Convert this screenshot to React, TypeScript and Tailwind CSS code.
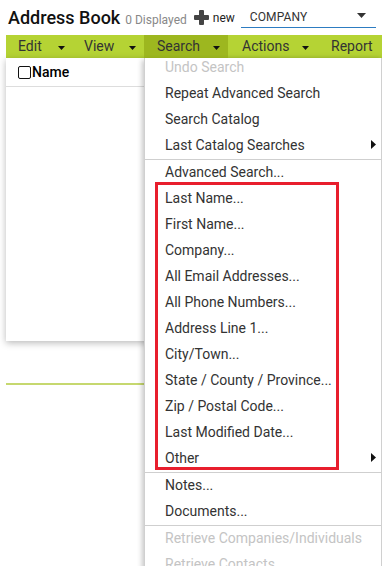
import React from "react";

const DownTri = ({ w = 7, h = 4, color = "#111" }: { w?: number; h?: number; color?: string }) => (
  <svg width={w} height={h} viewBox={`0 0 ${w} ${h}`} className="block">
    <polygon points={`0,0 ${w},0 ${w / 2},${h}`} fill={color} />
  </svg>
);

const RightTri = () => (
  <svg width="5" height="9" viewBox="0 0 5 9" className="block">
    <polygon points="0,0 5,4.5 0,9" fill="#111" />
  </svg>
);

type Item = { label: string; disabled?: boolean; sub?: boolean; sep?: boolean; first?: boolean };

const items: Item[] = [
  { label: "Undo Search", disabled: true, first: true },
  { label: "Repeat Advanced Search" },
  { label: "Search Catalog" },
  { label: "Last Catalog Searches", sub: true },
  { label: "Advanced Search...", sep: true },
  { label: "Last Name..." },
  { label: "First Name..." },
  { label: "Company..." },
  { label: "All Email Addresses..." },
  { label: "All Phone Numbers..." },
  { label: "Address Line 1..." },
  { label: "City/Town..." },
  { label: "State / County / Province..." },
  { label: "Zip / Postal Code..." },
  { label: "Last Modified Date..." },
  { label: "Other", sub: true },
  { label: "Notes...", sep: true },
  { label: "Documents..." },
  { label: "Retrieve Companies/Individuals", disabled: true, sep: true },
  { label: "Retrieve Contacts", disabled: true },
];

export default function App() {
  return (
    <div className="relative w-[382px] h-[566px] overflow-hidden bg-white font-['Roboto',sans-serif]">
      {/* Header */}
      <div className="flex items-center h-[35px] pl-[8px]">
        <div className="flex items-baseline">
          <span className="text-[18px] font-medium text-[#111] leading-none">Address Book</span>
          <span className="ml-[5px] text-[12px] text-[#888] leading-none">0 Displayed</span>
        </div>
        <svg width="15" height="15" viewBox="0 0 15 15" className="ml-[7px] block">
          <rect x="5" y="0" width="5" height="15" rx="1" fill="#444" />
          <rect x="0" y="5" width="15" height="5" rx="1" fill="#444" />
        </svg>
        <span className="ml-[4px] text-[12px] text-[#222] leading-none">new</span>
        <div className="ml-[6px] w-[135px] h-[24px] mb-[5px] mt-[2px] border-b border-[#2d7cc1] flex items-center pl-[9px] pr-[10px]">
          <span className="text-[12px] text-[#333] tracking-[0.1px] mt-[2px]">COMPANY</span>
          <div className="ml-auto">
            <DownTri w={9} h={5} color="#333" />
          </div>
        </div>
      </div>

      {/* Menubar */}
      <div className="ml-[6px] h-[23px] bg-[#b5d334] flex text-[14px] text-[#333]">
        <div className="w-[66px] flex items-center pl-[12px] pr-[7px]">
          <span>Edit</span>
          <div className="ml-auto mt-[2px]"><DownTri /></div>
        </div>
        <div className="w-[72px] flex items-center pl-[12px] pr-[8px]">
          <span>View</span>
          <div className="ml-auto mt-[2px]"><DownTri /></div>
        </div>
        <div className="w-[84px] flex items-center pl-[13px] pr-[8px] bg-[#9db71f]">
          <span>Search</span>
          <div className="ml-auto mt-[2px]"><DownTri /></div>
        </div>
        <div className="w-[89px] flex items-center pl-[14px] pr-[8px]">
          <span>Actions</span>
          <div className="ml-auto mt-[2px]"><DownTri /></div>
        </div>
        <div className="flex items-center pl-[14px]">
          <span>Report</span>
        </div>
      </div>

      {/* Panel */}
      <div className="ml-[6px] h-[283px] bg-white shadow-[0_2px_7px_rgba(0,0,0,0.28)]">
        <div className="h-[29px] border-b border-[#ddd] flex items-center pl-[12px]">
          <span className="w-[13px] h-[13px] border border-[#111] rounded-[2px] bg-white" />
          <span className="ml-[1px] text-[14px] font-medium text-black">Name</span>
        </div>
      </div>

      {/* green line */}
      <div className="ml-[6px] mt-[42px] h-[2px] bg-[#c6d86f]" />

      {/* Dropdown */}
      <div className="absolute left-[144px] top-[58px] w-[238px] h-[520px] bg-white border-x border-[#d0d0d0] shadow-[-2px_2px_5px_rgba(0,0,0,0.22)] text-[14px]">
        {items.map((it, i) => (
          <div
            key={i}
            className={
              (it.first
                ? "h-[23px] leading-[18px] pt-0 "
                : it.sep
                ? "h-[27px] leading-[20px] pt-[2px] border-t border-[#cfcfcf] "
                : "h-[26px] leading-[20px] pt-[2px] ") +
              "flex items-start pl-[20px] pr-[5px] " +
              (it.disabled ? "text-[#c4c4c4]" : "text-[#333]")
            }
          >
            <span>{it.label}</span>
            {it.sub && (
              <div className="ml-auto mt-[5px]">
                <RightTri />
              </div>
            )}
          </div>
        ))}
      </div>

      {/* Highlight box */}
      <div className="absolute left-[155px] top-[182px] w-[184px] h-[288px] border-[3px] border-[#e81e2d]" />
    </div>
  );
}
